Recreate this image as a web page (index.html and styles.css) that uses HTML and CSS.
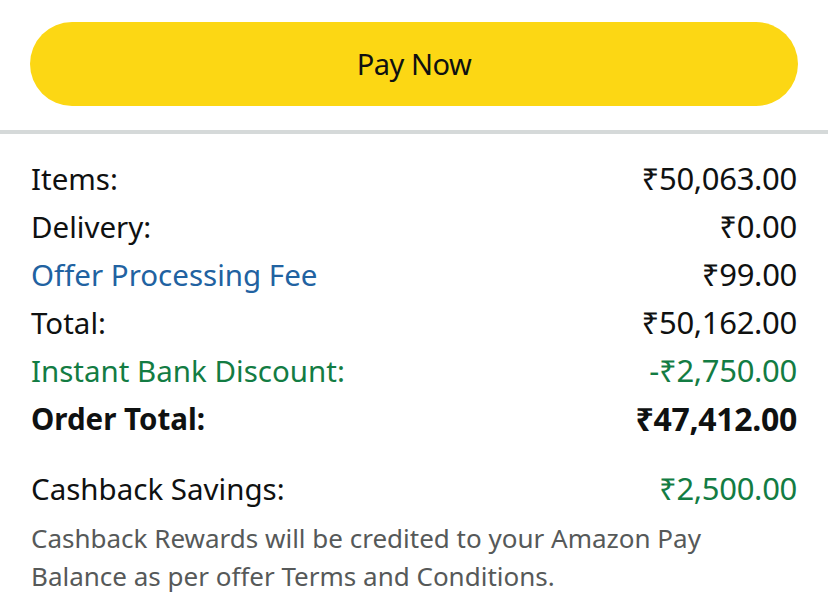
FILE: index.html
```html
<!DOCTYPE html>
<html lang="en">
<head>
  <meta charset="utf-8"/>
  <meta name="viewport" content="width=device-width, initial-scale=1.0"/>
  <title>Order Summary</title>
  <link rel="stylesheet" href="styles.css">
</head>
<body>
  <div class="pay-wrap">
    <button class="pay-button" type="button">Pay Now</button>
  </div>

  <hr class="divider"/>

  <section class="summary">
    <div class="row"><span>Items:</span><span class="amount">₹50,063.00</span></div>
    <div class="row"><span>Delivery:</span><span class="amount">₹0.00</span></div>
    <div class="row"><a class="link" href="#">Offer Processing Fee</a><span class="amount">₹99.00</span></div>
    <div class="row"><span>Total:</span><span class="amount">₹50,162.00</span></div>
    <div class="row green"><span>Instant Bank Discount:</span><span class="amount">-₹2,750.00</span></div>
    <div class="row total"><span>Order Total:</span><span class="amount">₹47,412.00</span></div>

    <div class="row cashback"><span>Cashback Savings:</span><span class="amount green">₹2,500.00</span></div>
    <p class="note">Cashback Rewards will be credited to your Amazon Pay Balance as per offer Terms and Conditions.</p>
  </section>
</body>
</html>
```

FILE: styles.css
```css
body {
  margin: 0;
  background: #fff;
  color: #0F1111;
  font-family: 'Noto Sans', 'DejaVu Sans', sans-serif;
}
.pay-wrap {
  padding: 22px 30px 0;
}
.pay-button {
  display: block;
  width: 100%;
  height: 84px;
  border: none;
  border-radius: 42px;
  background: #FCD714;
  color: #0F1111;
  font-family: 'Noto Sans', sans-serif;
  font-size: 29px;
  letter-spacing: -0.5px;
  cursor: pointer;
  padding-bottom: 3px;
}
.divider {
  margin: 24px 0 0;
  height: 4px;
  border: none;
  background: #D5D9D9;
}
.summary {
  padding: 20px 31px 0;
}
.row {
  display: flex;
  justify-content: space-between;
  align-items: center;
  height: 48px;
  font-size: 29.5px;
}
.amount {
  font-size: 31px;
  letter-spacing: -0.3px;
}
.link {
  color: #2162A1;
  text-decoration: none;
}
.green {
  color: #137C43;
}
.total {
  font-weight: bold;
}
.total .amount {
  font-size: 32px;
}
.cashback {
  margin-top: 22px;
}
.note {
  margin: 7px 0 0;
  max-width: 720px;
  color: #565959;
  font-size: 26px;
  line-height: 38px;
}
```
